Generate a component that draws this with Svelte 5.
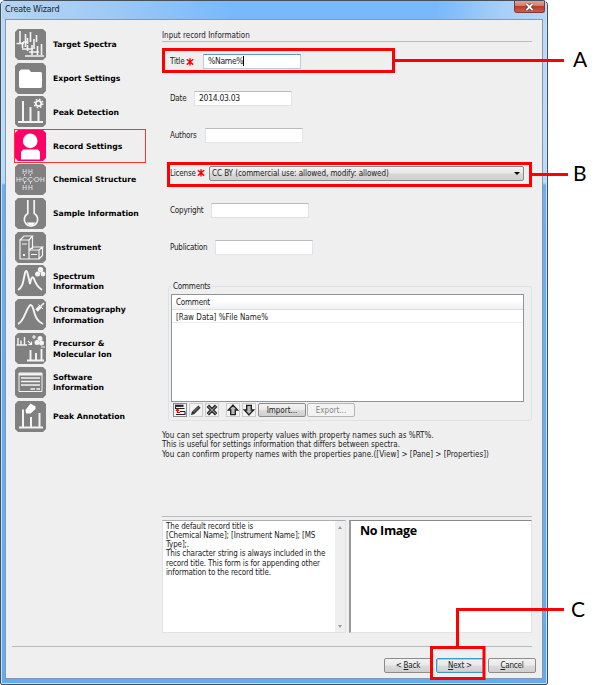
<script>
  const steps = [
    { icon: 'target', lines: ['Target Spectra'] },
    { icon: 'folder', lines: ['Export Settings'] },
    { icon: 'peak', lines: ['Peak Detection'] },
    { icon: 'record', lines: ['Record Settings'], active: true },
    { icon: 'chem', lines: ['Chemical Structure'] },
    { icon: 'flask', lines: ['Sample Information'] },
    { icon: 'instrument', lines: ['Instrument'] },
    { icon: 'spectrum', lines: ['Spectrum', 'Information'] },
    { icon: 'chroma', lines: ['Chromatography', 'Information'] },
    { icon: 'precursor', lines: ['Precursor &', 'Molecular Ion'] },
    { icon: 'software', lines: ['Software', 'Information'] },
    { icon: 'annotate', lines: ['Peak Annotation'] }
  ];
</script>

{#snippet star()}
  <svg class="star" width="8" height="8" viewBox="0 0 8 8"><path d="M4 .2V7.6M.8 1.2 7.2 6.6M7.2 1.2.8 6.6" /></svg>
{/snippet}

{#snippet stepIcon(name)}
  <svg class="icon" width="31" height="31" viewBox="0 0 31 31">
    <path d="M3 0H28L31 3V28L28 31H3L0 28V3Z" fill={name === 'record' ? '#ff0066' : '#808080'} />
    {#if name === 'target'}
      <g stroke="#f4f4f4" stroke-width="1.600" fill="none">
        <path d="M1.500 14.500H9M5 14V2M10.500 18V5M8 13H12M15.500 13V3M12.500 9V15M19 10V20M21.500 6V13M26.500 15V26M17 26V16M12.500 22V16M7 20H18M14 23H24M10 27H29M7.500 13V19M22.500 17V26" />
      </g>
    {:else if name === 'folder'}
      <path d="M4 8.500 6 6.500H14L16 9H26L27 10V24L26 25H5L4 24Z" fill="#fff" />
    {:else if name === 'peak'}
      <path d="M3 26H28M8 26V5M15.500 26V11M23.500 26V15" stroke="#f4f4f4" stroke-width="2" fill="none" />
      <circle cx="23.500" cy="7.500" r="2.700" stroke="#f4f4f4" stroke-width="1.800" fill="none" />
      <circle cx="23.500" cy="7.500" r="4.200" stroke="#f4f4f4" stroke-width="1.500" stroke-dasharray="1.6 1.7" fill="none" />
    {:else if name === 'record'}
      <circle cx="15.200" cy="10.900" r="7.300" fill="#fff" />
      <path d="M6 29.500V22L8 19.500H23L25 22V29.500Z" fill="#fff" />
    {:else if name === 'chem'}
      <g fill="#eee" font-family="Liberation Sans, sans-serif" font-size="6.500" letter-spacing="0">
        <text x="7.200" y="9.500">H</text><text x="13" y="9.500">H</text>
        <text x="1" y="17.500">H</text><text x="7.200" y="17.500">C</text><text x="13" y="17.500">C</text><text x="19" y="17.500">O</text><text x="25" y="17.500">H</text>
        <text x="7.200" y="25.500">H</text><text x="13" y="25.500">H</text>
      </g>
      <path d="M5.500 15.200H7.500M12 15.200H13.500M18 15.200H19.300M24 15.200H25M9.600 10V12M15.400 10V12M9.600 18V20M15.400 18V20" stroke="#eee" stroke-width=".8" />
    {:else if name === 'flask'}
      <path d="M12.800 2V15.500A6.700 6.700 0 1 0 19.200 15.500V2" stroke="#f4f4f4" stroke-width="1.700" fill="none" />
      <path d="M11.500 24.500H20.500L18 27H14Z" fill="#fff" />
    {:else if name === 'instrument'}
      <g stroke="#f4f4f4" stroke-width="1.200" fill="none">
        <path d="M5 8H14V27H5ZM5 8 9 4H17.500L14 8M17.500 4V17M14 18H24V27H14M14 18 18 15H27.500L24 18M27.500 15V23.500L24 27M7 12H12M16 22.500H22" />
        <path d="M9 22V24" stroke-width="2" />
      </g>
    {:else if name === 'spectrum'}
      <path d="M3 25C8 22 8 17 10 8Q11.500 3 13 10L15 19Q17 8 19.500 15C21 20 23 22 27 25" stroke="#f4f4f4" stroke-width="1.900" fill="none" />
      <circle cx="25.500" cy="4.700" r="2.700" fill="#f4f4f4" /><circle cx="22.600" cy="9" r="2.500" fill="#f4f4f4" /><circle cx="28" cy="9" r="2.400" fill="#f4f4f4" />
    {:else if name === 'chroma'}
      <path d="M3 25C9 22 10 13 14 7.500Q16 4 18 9C20 16 21 22 28 25" stroke="#f4f4f4" stroke-width="1.900" fill="none" />
      <path d="M21.500 11.500 26 7" stroke="#f4f4f4" stroke-width="3.400" /><path d="M26 7 29 4" stroke="#f4f4f4" stroke-width="1.600" /><path d="M23.500 5.500 28 10" stroke="#f4f4f4" />
    {:else if name === 'precursor'}
      <g stroke="#f4f4f4" fill="none">
        <path d="M1.500 12H12M3 12V5M6 12V7.500M9.500 12V4" stroke-width="1.400" />
        <path d="M13 8 16 11M13.500 11.500H16.500V8.500M17 4H21M19 2V6M26 14H30" stroke-width="1.200" />
        <path d="M12 27.500H29M15.500 27V17M21 27V20M26.500 27V16" stroke-width="1.900" />
      </g>
      <g fill="#f4f4f4"><circle cx="25" cy="5.500" r="2.500" /><circle cx="22" cy="9.500" r="2.500" /><circle cx="26.500" cy="10" r="2.500" /></g>
    {:else if name === 'software'}
      <path d="M4 6H27V24.500H4Z" stroke="#f4f4f4" fill="none" />
      <path d="M4 7.300H27" stroke="#f4f4f4" stroke-width="2.400" />
      <path d="M6 11H25M6 14.500H25M6 18H25M15.500 22H20M21.500 22H25" stroke="#f4f4f4" stroke-width="1.500" />
    {:else}
      <path d="M4 26.500H28M8 26V8.500M16 26V16M24.500 26V12" stroke="#f4f4f4" stroke-width="2" fill="none" />
      <path d="M10.500 9 15.500 2.500 20.500 5.500V8L15.500 12.500H11Z" fill="#fff" />
    {/if}
  </svg>
{/snippet}

<div class="stage">
  <div class="window">
    <header>
      <span>Create Wizard</span>
      <button class="close" aria-label="Close">
        <svg width="9" height="8" viewBox="0 0 9 8"><path d="M1.500 1 7.500 7M7.500 1 1.500 7" stroke="#5b2a28" stroke-width="3.200" /><path d="M1.500 1 7.500 7M7.500 1 1.500 7" stroke="#fff" stroke-width="1.800" /></svg>
      </button>
    </header>

    <div class="client">
      <div class="body">
        <nav>
          {#each steps as step}
            <div class="step" class:active={step.active}>
              {@render stepIcon(step.icon)}
              <span class="label">{#each step.lines as line}<span>{line}</span>{/each}</span>
            </div>
          {/each}
        </nav>

        <main>
          <h1>Input record Information</h1>
          <div class="fields">
            <div class="row"><span class="w1">Title</span>{@render star()}<div class="input focus">%Name%<i></i></div></div>
            <div class="row"><span class="w2">Date</span><div class="input">2014.03.03</div></div>
            <div class="row"><span class="w3">Authors</span><div class="input"></div></div>
            <div class="row"><span class="w4">License</span>{@render star()}<div class="combo"><span>CC BY (commercial use: allowed, modify: allowed)</span><b></b></div></div>
            <div class="row"><span class="w5">Copyright</span><div class="input"></div></div>
            <div class="row"><span class="w6">Publication</span><div class="input"></div></div>
          </div>

          <section class="group">
            <span class="legend">Comments</span>
            <div class="table">
              <div class="th">Comment</div>
              <div class="td">[Raw Data] %File Name%</div>
            </div>
            <div class="tools">
              <button class="tool" aria-label="Insert"><svg width="12" height="12" viewBox="0 0 12 12"><path d="M1 1.800H9.500" stroke="#222" stroke-width="2.200" /><path d="M1.500 3V4.500H10.500M6 7.500H11M2 10.500H11V7.500" fill="none" stroke="#222" stroke-width="1.100" /><path d="M6 8.500H3.500V5.500M2 6.800 3.500 5 5 6.800" stroke="#f00000" stroke-width="1.100" fill="none" /></svg></button>
              <button class="tool" aria-label="Edit"><svg width="12" height="12" viewBox="0 0 13 13"><path d="M1 12 2 8.500 9 1.500 11.500 4 4.500 11Z" fill="#333" /><path d="M4 8.500 9 3.500" stroke="#999" /></svg></button>
              <button class="tool" aria-label="Delete"><svg width="12" height="12" viewBox="0 0 13 13"><path d="M2 2 11 11M11 2 2 11" stroke="#222" stroke-width="3.800" /><path d="M2.500 2.500 10.500 10.500M10.500 2.500 2.500 10.500" stroke="#999" stroke-width="1.200" /></svg></button>
              <button class="tool up" aria-label="Move up"><svg width="12" height="12" viewBox="0 0 13 13"><path d="M6.500 1.200 11.500 6.500H9V11.500H4V6.500H1.500Z" fill="#bbb" stroke="#222" stroke-width="1.500" /></svg></button>
              <button class="tool" aria-label="Move down"><svg width="12" height="12" viewBox="0 0 13 13"><path d="M6.500 11.800 11.500 6.500H9V1.500H4V6.500H1.500Z" fill="#bbb" stroke="#222" stroke-width="1.500" /></svg></button>
              <button class="btn imp">Import...</button>
              <button class="btn exp" disabled>Export...</button>
            </div>
          </section>

          <div class="hint">
            <div>You can set spectrum property values with property names such as %RT%.</div>
            <div class="tight">This is useful for settings information that differs between spectra.</div>
            <div>You can confirm property names with the properties pane.([View] &gt; [Pane] &gt; [Properties])</div>
          </div>

          <div class="panes">
            <div class="desc">
              <div class="desc-text">
                <div>The default record title is</div>
                <div>[Chemical Name]; [Instrument Name]; [MS</div>
                <div>Type];.</div>
                <div>This character string is always included in the</div>
                <div>record title. This form is for appending other</div>
                <div>information to the record title.</div>
              </div>
              <div class="scroll"><i class="su"></i><i class="sd"></i></div>
            </div>
            <div class="preview">No Image</div>
          </div>
        </main>
      </div>

      <footer>
        <button class="btn">&lt; <u>B</u>ack</button>
        <button class="btn next"><u>N</u>ext &gt;</button>
        <button class="btn"><u>C</u>ancel</button>
      </footer>
    </div>
  </div>

  <svg class="marks" width="603" height="685" viewBox="0 0 603 685">
    <g fill="none" stroke="#f00" stroke-width="3">
      <path d="M163.500 49.500H393.500V71.500H163.500Z M395 60.500H564" />
      <path d="M168.500 163.500H530.500V185.500H168.500Z M532 174.500H568" />
      <path d="M431.500 647.500H484V678.500H431.500Z M457.500 646V609.500H564" />
    </g>
  </svg>
  <span class="mark a">A</span>
  <span class="mark b">B</span>
  <span class="mark c">C</span>
</div>

<style>
  :global(body) { background: #fff; }
  .stage { position: relative; width: 603px; height: 685px; overflow: hidden; background: #fff; font: 8px/9px "DejaVu Sans Condensed", "DejaVu Sans", sans-serif; letter-spacing: -0.2px; color: #222; white-space: nowrap; }
  .stage * { box-sizing: border-box; }
  button { font: inherit; letter-spacing: inherit; color: inherit; margin: 0; padding: 0; }
  .window { width: 548px; height: 685px; display: flex; flex-direction: column; padding: 0 4px 5px 4px; border: 1px solid #45505c; border-radius: 5px 5px 2px 2px; background: linear-gradient(#b9d8f7 0, #bddbf8 120px, #b8daf9 182px, #69b0f4 184px, #62acf5 100%); box-shadow: inset 0 0 0 1px #c0e2fc; }
  header { height: 18px; flex: none; display: flex; justify-content: space-between; align-items: flex-start; margin: 0 -3px; padding-left: 3px; background: linear-gradient(90deg, #b5d4f1 0, #a5cdf5 15%, #79b9fb 42%, #79b9fb 80%, #a7cff8 92%, #b5d8fb 100%); }
  header span { font-size: 9px; line-height: 17px; letter-spacing: -0.2px; color: #222; }
  .close { width: 31px; height: 12px; margin-right: 1px; border: 1px solid #7e3c39; border-top: 0; border-radius: 0 0 3px 3px; background: linear-gradient(#dca39a, #cf7b6d 45%, #b93c2b 50%, #cb6046); display: flex; align-items: center; justify-content: center; }
  .client { flex: 1; border: 1px solid #8698ab; background: #efefef; display: flex; flex-direction: column; min-height: 0; }
  .body { flex: 1; display: flex; min-height: 0; border-bottom: 1px solid #b9b9b9; margin: 0 10px 0 6px; }
  nav { width: 132px; margin: 0 16px 0 2px; padding-top: 7.500px; flex: none; }
  .step { height: 33.800px; display: flex; align-items: center; padding-left: 1px; }
  .step.active { box-shadow: inset 0 0 0 1px #f33; }
  .icon { flex: none; }
  .label { margin-left: 7px; padding-top: 2px; display: flex; flex-direction: column; font: bold 7.700px/10.300px "DejaVu Sans", sans-serif; letter-spacing: 0; color: #000; }
  main { flex: 1; min-width: 0; }
  h1 { width: 370px; height: 22px; margin: 0; padding-top: 11px; border-bottom: 1px solid #bbb; font: inherit; letter-spacing: 0; }
  .fields { padding: 1px 0 0 8px; }
  .row { height: 37.200px; display: flex; align-items: center; }
  .star { flex: none; stroke: #f00; stroke-width: 1.400; fill: none; }
  .w1 { width: 16px; } .w2 { width: 24px; } .w3 { width: 35px; } .w4 { width: 27px; } .w5 { width: 41px; } .w6 { width: 45px; }
  .input { width: 98px; height: 15px; padding: 0 4px; border: 1px solid #e0e4ea; border-top-color: #b8babf; background: #fff; line-height: 12px; font-size: 8.500px; letter-spacing: -0.300px; display: flex; }
  .input.focus { border-color: #b5cfe7; border-top-color: #5a92c0; margin-left: 9px; }
  .input i { width: 1px; height: 10px; background: #000; margin-top: 1px; }
  .combo { width: 315px; height: 15px; margin-left: 4px; padding: 0 3px 0 2px; border: 1px solid #898989; border-radius: 2px; background: linear-gradient(#f2f2f2, #e6e6e6 48%, #d8d8d8 52%, #cfcfcf); display: flex; justify-content: space-between; align-items: center; letter-spacing: -0.060px; }
  .combo b { border: 3px solid transparent; border-top-color: #000; border-bottom: 0; }
  .group { position: relative; width: 364px; height: 135px; margin: 20px 0 0 6px; padding: 7px 7px 0 2px; border: 1px solid #dce2e6; border-radius: 3px; }
  .legend { position: absolute; left: 2px; top: -5px; padding: 0 2px; background: #efefef; }
  .table { height: 108px; border: 1px solid #8f939a; background: #fff; }
  .th { height: 15px; padding: 3px 4px 0; background: linear-gradient(#fff 40%, #f0f1f3); border-bottom: 1px solid #dcdfe2; }
  .td { height: 13px; padding: 3px 4px 0; border-bottom: 1px solid #eee; letter-spacing: 0.020px; }
  .tools { display: flex; padding: 1px 0 0 2px; }
  .tool { width: 14px; height: 14px; margin-right: 2px; border: 1px solid #ccc; background: #f3f3f3; display: flex; align-items: center; justify-content: center; }
  .tool svg { flex: none; }
  .tool:first-child { border-color: #888; }
  .tool.up { margin-left: 5px; }
  .btn { width: 48px; height: 15px; border: 1px solid #8c8c8c; border-radius: 2px; background: linear-gradient(#f2f2f2, #e9e9e9 48%, #dcdcdc 52%, #cfcfcf); display: flex; align-items: center; justify-content: center; white-space: pre; }
  .imp { height: 14px; margin-right: 1px; letter-spacing: 0; }
  .exp { height: 14px; color: #888; background: #f3f3f3; border-color: #b5b5b5; letter-spacing: 0; }
  .hint { padding-top: 10px; line-height: 9.200px; letter-spacing: 0.030px; }
  .tight { letter-spacing: -0.040px; }
  .panes { width: 370px; height: 117px; margin-top: 57px; padding-top: 3px; border-top: 1px solid #bcbcbc; display: flex; }
  .desc { width: 184px; height: 113px; border: 1px solid #dfe2e7; border-top-color: #abadb3; background: #fff; display: flex; justify-content: space-between; margin-right: 3px; }
  .desc-text { padding: 1px 3px; line-height: 9.200px; letter-spacing: -0.130px; }
  .scroll { width: 10px; background: #efefef; display: flex; flex-direction: column; justify-content: space-between; align-items: center; padding: 5px 0 4px; }
  .su { border: 2.500px solid transparent; border-top: 0; border-bottom: 3px solid #999; }
  .sd { border: 2.500px solid transparent; border-bottom: 0; border-top: 3px solid #999; }
  .preview { flex: 1; height: 113px; border: 1px solid #e3e3e3; border-top-color: #888; border-left: 2px solid #999; background: #fff; padding: 0 9px; font: bold 12.500px/19px "Open Sans", sans-serif; letter-spacing: -0.350px; color: #000; }
  footer { height: 31px; flex: none; display: flex; justify-content: flex-end; gap: 4px; padding: 11px 6px 0; }
  .next { border-color: #3c9ac8; box-shadow: inset 0 0 0 1px #8edbf5; }
  .marks { position: absolute; left: 0; top: 0; }
  .mark { position: absolute; font: 21px/24px Lato, sans-serif; letter-spacing: 0; color: #000; }
  .a { left: 573px; top: 47px; }
  .b { left: 573px; top: 161px; }
  .c { left: 571px; top: 597px; }
</style>
